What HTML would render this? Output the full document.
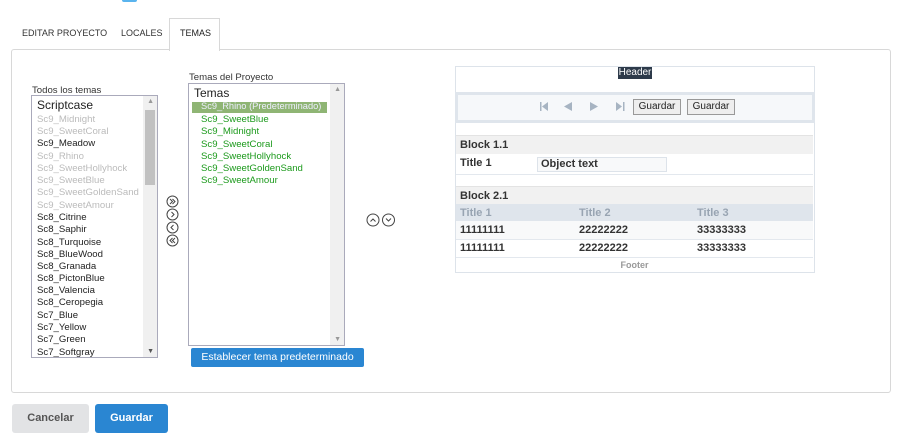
<!DOCTYPE html><html><head><style>
body{margin:0;width:898px;height:438px;background:#fff;font-family:"Liberation Sans",sans-serif;position:relative;overflow:hidden}
.a{position:absolute}
.it{position:absolute;left:5px;font-size:9.6px;white-space:nowrap}
.g{color:#bbb}.k{color:#222}.gr{color:#1c9a1c}
.pv{font-size:11px;color:#333;font-weight:bold}
</style></head><body>
<div class="a" style="left:122px;top:0;width:15px;height:2px;background:#5ab4ee;border-radius:0 0 3px 3px"></div>
<div class="a" style="left:11px;top:49px;width:878px;height:342px;border:1px solid #d8d8d8;border-radius:3px"></div>
<div class="a" style="left:169px;top:18px;width:49px;height:32px;border:1px solid #d8d8d8;border-bottom:none;background:#fff"></div>
<div class="a" style="left:22px;top:28px;font-size:9px;color:#333">EDITAR PROYECTO</div>
<div class="a" style="left:121px;top:28px;font-size:9px;color:#333">LOCALES</div>
<div class="a" style="left:180px;top:28px;font-size:9px;color:#222">TEMAS</div>

<div class="a" style="left:32px;top:85px;font-size:9.6px;color:#333">Todos los temas</div>
<div class="a" style="left:31px;top:95px;width:125px;height:261px;border:1px solid #aab;overflow:hidden">
<div class="a" style="right:0;top:0;width:14px;height:100%;background:#f0f0f0"></div>
<div class="a" style="right:2px;top:14px;width:10px;height:75px;background:#c1c1c1"></div>
<div class="a" style="right:3px;top:2px;font-size:7px;color:#999">▲</div>
<div class="a" style="right:3px;bottom:2px;font-size:7px;color:#555">▼</div>
<div class="it k" style="top:2px;font-size:12px">Scriptcase</div>
<div class="it g" style="top:18px">Sc9_Midnight</div>
<div class="it g" style="top:30px">Sc9_SweetCoral</div>
<div class="it k" style="top:42px">Sc9_Meadow</div>
<div class="it g" style="top:55px">Sc9_Rhino</div>
<div class="it g" style="top:67px">Sc9_SweetHollyhock</div>
<div class="it g" style="top:79px">Sc9_SweetBlue</div>
<div class="it g" style="top:91px">Sc9_SweetGoldenSand</div>
<div class="it g" style="top:104px">Sc9_SweetAmour</div>
<div class="it k" style="top:116px">Sc8_Citrine</div>
<div class="it k" style="top:128px">Sc8_Saphir</div>
<div class="it k" style="top:141px">Sc8_Turquoise</div>
<div class="it k" style="top:153px">Sc8_BlueWood</div>
<div class="it k" style="top:165px">Sc8_Granada</div>
<div class="it k" style="top:177px">Sc8_PictonBlue</div>
<div class="it k" style="top:189px">Sc8_Valencia</div>
<div class="it k" style="top:201px">Sc8_Ceropegia</div>
<div class="it k" style="top:214px">Sc7_Blue</div>
<div class="it k" style="top:226px">Sc7_Yellow</div>
<div class="it k" style="top:238px">Sc7_Green</div>
<div class="it k" style="top:251px">Sc7_Softgray</div>
</div>

<svg class="a" style="left:166px;top:195px" width="13" height="52" viewBox="0 0 13 52" fill="none" stroke="#444" stroke-width="1">
<circle cx="6.5" cy="6.5" r="5.5"/><path d="M4 4l2.5 2.5L4 9M6.5 4L9 6.5 6.5 9"/>
<circle cx="6.5" cy="19.5" r="5.5"/><path d="M5.5 17l2.5 2.5-2.5 2.5"/>
<circle cx="6.5" cy="32.5" r="5.5"/><path d="M7.5 30L5 32.5 7.5 35"/>
<circle cx="6.5" cy="45.5" r="5.5"/><path d="M6.5 43L4 45.5 6.5 48M9 43L6.5 45.5 9 48"/>
</svg>

<div class="a" style="left:189px;top:72px;font-size:9.6px;color:#333">Temas del Proyecto</div>
<div class="a" style="left:188px;top:83px;width:155px;height:261px;border:1px solid #aab;overflow:hidden">
<div class="a" style="right:0;top:0;width:14px;height:100%;background:#f0f0f0"></div>
<div class="a" style="right:3px;top:2px;font-size:7px;color:#999">▲</div>
<div class="a" style="right:3px;bottom:2px;font-size:7px;color:#999">▼</div>
<div class="it k" style="top:2px;font-size:12px">Temas</div>
<div class="a" style="left:3px;top:18px;width:135px;height:11px;background:#8fb574"></div>
<div class="it" style="left:12px;top:17px;color:#eef;font-size:9.3px">Sc9_Rhino (Predeterminado)</div>
<div class="it gr" style="left:12px;top:30px">Sc9_SweetBlue</div>
<div class="it gr" style="left:12px;top:42px">Sc9_Midnight</div>
<div class="it gr" style="left:12px;top:55px">Sc9_SweetCoral</div>
<div class="it gr" style="left:12px;top:67px">Sc9_SweetHollyhock</div>
<div class="it gr" style="left:12px;top:79px">Sc9_SweetGoldenSand</div>
<div class="it gr" style="left:12px;top:91px">Sc9_SweetAmour</div>
</div>
<div class="a" style="left:191px;top:348px;width:173px;height:19px;background:#2a86d2;border-radius:2px;color:#fff;font-size:10.5px;text-align:center;line-height:19px">Establecer tema predeterminado</div>

<svg class="a" style="left:366px;top:213px" width="30" height="14" viewBox="0 0 30 14" fill="none" stroke="#444">
<circle cx="7" cy="7" r="6"/><path d="M4.5 8.5L7 6l2.5 2.5"/><circle cx="22.5" cy="7" r="6"/><path d="M20 5.5l2.5 2.5L25 5.5"/>
</svg>

<div class="a" style="left:455px;top:66px;width:358px;height:205px;border:1px solid #dde3ea"></div>
<div class="a" style="left:618px;top:67px;width:34px;height:12px;background:#2d3a4a;color:#fff;font-size:10px;line-height:12px;text-align:center">Header</div>
<div class="a" style="left:455px;top:92px;width:354px;height:25px;border:3px solid #dfe5ec;background:#f6f8fa"></div>
<svg class="a" style="left:538px;top:101px" width="90" height="12" viewBox="0 0 90 12" fill="#a7b4c2">
<rect x="2" y="1" width="1.5" height="9"/><path d="M10 1v9l-6-4.5z"/><path d="M34 1v9l-8-4.5z"/><path d="M52 1v9l8-4.5z"/><path d="M78 1v9l6-4.5z"/><rect x="85" y="1" width="1.5" height="9"/>
</svg>
<div class="a" style="left:633px;top:99px;width:46px;height:14px;border:1px solid #999;background:#eee;font-size:10px;text-align:center;line-height:14px;color:#222">Guardar</div>
<div class="a" style="left:687px;top:99px;width:46px;height:14px;border:1px solid #999;background:#eee;font-size:10px;text-align:center;line-height:14px;color:#222">Guardar</div>

<div class="a" style="left:456px;top:135px;width:357px;height:18px;background:#f1f1f1;border-top:1px solid #e3e3e3"></div>
<div class="a pv" style="left:460px;top:139px">Block 1.1</div>
<div class="a pv" style="left:460px;top:157px">Title 1</div>
<div class="a" style="left:537px;top:157px;width:128px;height:13px;border:1px solid #dde3ea;background:#f8f9fa"></div>
<div class="a pv" style="left:541px;top:158px">Object text</div>
<div class="a" style="left:456px;top:174px;width:357px;height:1px;background:#e3e8ee"></div>
<div class="a" style="left:456px;top:186px;width:357px;height:18px;background:#f1f1f1;border-top:1px solid #e3e3e3"></div>
<div class="a pv" style="left:460px;top:190px">Block 2.1</div>
<div class="a" style="left:456px;top:204px;width:357px;height:17px;background:#dfe5ec"></div>
<div class="a pv" style="left:460px;top:207px;color:#98a4b2">Title 1</div>
<div class="a pv" style="left:579px;top:207px;color:#98a4b2">Title 2</div>
<div class="a pv" style="left:697px;top:207px;color:#98a4b2">Title 3</div>
<div class="a" style="left:456px;top:221px;width:357px;height:18px;background:#f8f9fa;border-bottom:1px solid #e3e8ee"></div>
<div class="a pv" style="left:460px;top:224px">11111111</div><div class="a pv" style="left:579px;top:224px">22222222</div><div class="a pv" style="left:697px;top:224px">33333333</div>
<div class="a" style="left:456px;top:257px;width:357px;height:1px;background:#e3e8ee"></div>
<div class="a pv" style="left:460px;top:242px">11111111</div><div class="a pv" style="left:579px;top:242px">22222222</div><div class="a pv" style="left:697px;top:242px">33333333</div>
<div class="a" style="left:456px;top:260px;width:357px;text-align:center;font-size:9px;color:#999;font-weight:bold">Footer</div>

<div class="a" style="left:12px;top:404px;width:77px;height:29px;background:#e2e3e5;border-radius:3px;color:#555;font-size:11px;font-weight:bold;text-align:center;line-height:29px">Cancelar</div>
<div class="a" style="left:95px;top:404px;width:73px;height:29px;background:#2a86d2;border-radius:3px;color:#fff;font-size:11px;font-weight:bold;text-align:center;line-height:29px">Guardar</div>
</body></html>
